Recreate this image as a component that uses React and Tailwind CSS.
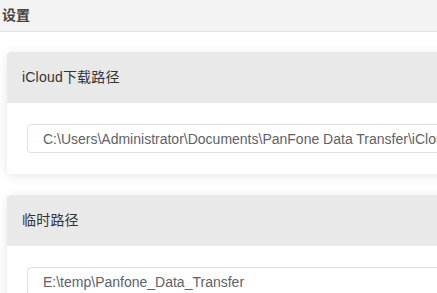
import React from "react";

const paths = [
  { label: "iCloud下载路径", value: "C:\\Users\\Administrator\\Documents\\PanFone Data Transfer\\iCloud" },
  { label: "临时路径", value: "E:\\temp\\Panfone_Data_Transfer" },
];

const PathCard = ({ label, value }) => (
  <div className="w-[470px] shrink-0 bg-white rounded-[4px] shadow-[0_2px_12px_rgba(0,0,0,0.1)] overflow-hidden">
    <div className="h-[51px] bg-[#e9e9e9] pl-[15px] flex items-center text-[14px] text-[#333] tracking-[0.2px]">{label}</div>
    <div className="pt-[21px] pb-[21px] pl-[20px]">
      <input
        readOnly
        value={value}
        className="w-full h-[29px] border border-[#dcdfe6] rounded-[4px] pl-[15px] text-[14px] text-[#606266] outline-none bg-white"
      />
    </div>
  </div>
);

export default function App() {
  return (
    <div className="w-[437px] h-[293px] overflow-hidden bg-white font-['Liberation_Sans','Noto_Sans_CJK_SC',sans-serif]">
      <div className="h-[32px] bg-[#f3f3f3] border-b border-[#e2e2e2] pl-[2px] flex items-center text-[14px] font-bold text-[#444]">
        设置
      </div>
      <div className="pl-[7px] pt-[20px] flex flex-col gap-[21px]">
        {paths.map((p) => (
          <PathCard key={p.label} label={p.label} value={p.value} />
        ))}
      </div>
    </div>
  );
}
